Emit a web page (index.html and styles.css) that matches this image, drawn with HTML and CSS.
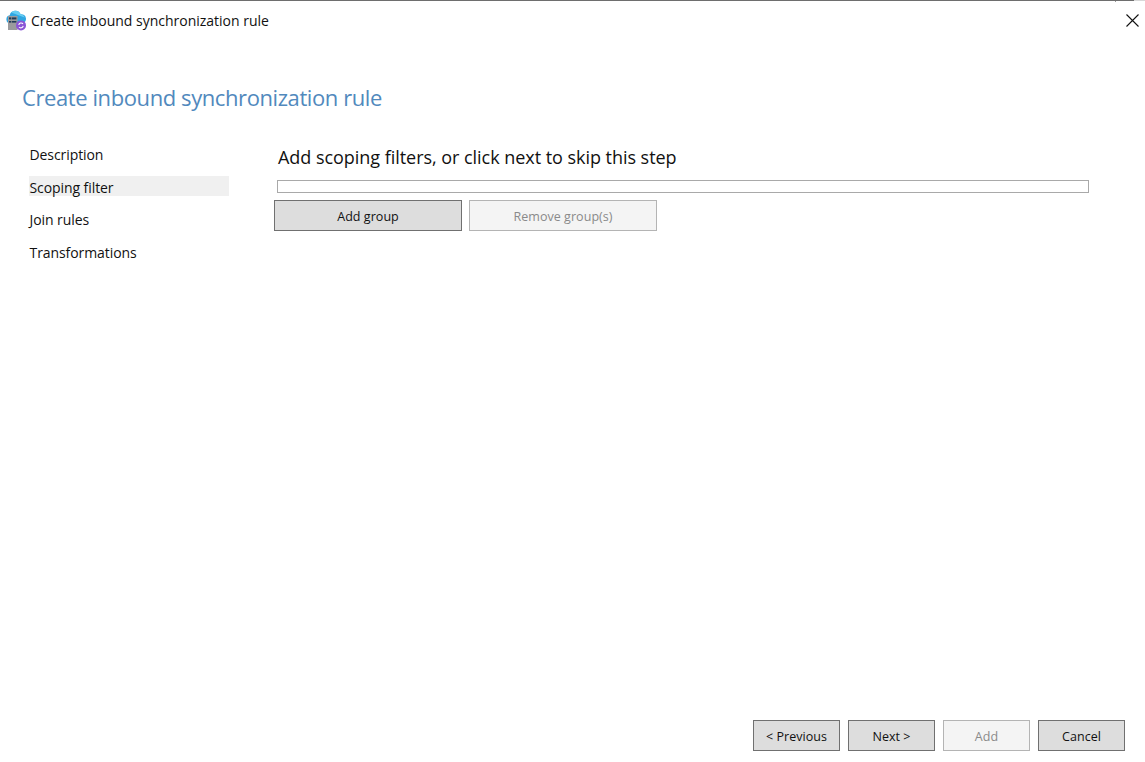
FILE: index.html
```html
<!DOCTYPE html>
<html lang="en">
<head>
<meta charset="utf-8">
<title>Create inbound synchronization rule</title>
<link rel="stylesheet" href="styles.css">
</head>
<body>
<div class="window">
  <div class="top-edge"></div>
  <header class="titlebar">
    <svg class="app-icon" width="20" height="22" viewBox="0 0 20 22">
      <path d="M4.5 14.5a4.2 4.2 0 0 1-.8-8.3A5.8 5.8 0 0 1 14.6 5.2a4.7 4.7 0 0 1 1.4 9.3z" fill="#2fa6e2"/>
      <path d="M5.2 3.6a5.6 5.6 0 0 1 9.4 1.6 4.6 4.6 0 0 1 4 3.2z" fill="#66cdf2"/>
      <rect x="2" y="7" width="9.5" height="14" fill="#9a9b9d"/>
      <rect x="3" y="8.4" width="2.2" height="2" fill="#1f3b58"/>
      <rect x="5.8" y="8.4" width="4.6" height="2" fill="#1f3b58"/>
      <rect x="3" y="12" width="2.2" height="1.6" fill="#1f3b58"/>
      <rect x="5.8" y="12" width="4.6" height="1.6" fill="#1f3b58"/>
      <circle cx="15" cy="16.4" r="5" fill="#8b55d6"/>
      <path d="M12.8 16a2.4 2.4 0 0 1 4.2-1.2M17.2 16.8a2.4 2.4 0 0 1-4.2 1.2" fill="none" stroke="#fff" stroke-width="1.1"/>
    </svg>
    <span class="window-title">Create inbound synchronization rule</span>
    <svg class="close" width="13" height="13" viewBox="0 0 13 13"><path d="M.5.5l12 12M12.5.5l-12 12" stroke="#111" stroke-width="1.1" fill="none"/></svg>
  </header>
  <h1 class="page-title">Create inbound synchronization rule</h1>
  <div class="content">
    <nav class="steps">
      <div class="step">Description</div>
      <div class="step active">Scoping filter</div>
      <div class="step">Join rules</div>
      <div class="step">Transformations</div>
    </nav>
    <main class="panel">
      <h2 class="panel-title">Add scoping filters, or click next to skip this step</h2>
      <div class="group-box"></div>
      <div class="group-actions">
        <button class="btn wide">Add group</button>
        <button class="btn wide" disabled>Remove group(s)</button>
      </div>
    </main>
  </div>
  <footer class="footer">
    <button class="btn">&lt; Previous</button>
    <button class="btn">Next &gt;</button>
    <button class="btn" disabled>Add</button>
    <button class="btn">Cancel</button>
  </footer>
</div>
</body>
</html>
```
FILE: styles.css
```css
* { box-sizing: border-box; }
html, body { margin: 0; height: 100%; background: #fff; }
body { font-family: "Open Sans", "Noto Sans", "Liberation Sans", sans-serif; color: #111; overflow: hidden; }
.window { height: 762px; display: flex; flex-direction: column; }
.top-edge { height: 1px; flex: none; position: relative; background: linear-gradient(to right, #6e6e6e 1134px, #d8d8d8 1134px); }
.top-edge::after { content: ""; position: absolute; left: 1115px; top: 1px; width: 1px; height: 1px; background: #9a9a9a; }
.titlebar { height: 39px; display: flex; align-items: center; padding: 0 6px; flex: none; }
.app-icon { flex: none; margin-top: -1px; }
.window-title { margin-left: 5px; font-size: 14px; letter-spacing: -0.01px; }
.close { margin-left: auto; }
.page-title { margin: 39px 0 0 22px; font-size: 22px; line-height: 36px; font-weight: 400; color: #5189bd; letter-spacing: -0.41px; }
.content { display: flex; flex: 1; margin-top: 28px; }
.steps { width: 200px; margin-left: 29px; flex: none; display: flex; flex-direction: column; gap: 12.5px; }
.step { height: 20px; line-height: 24px; font-size: 14px; letter-spacing: -0.08px; padding-left: 0.5px; }
.step.active { background: #f0f0f0; }
.panel { margin-left: 45px; flex: 1; padding-top: 2px; }
.panel-title { margin: 0 0 0 4px; font-size: 18px; line-height: 24px; font-weight: 400; letter-spacing: -0.04px; }
.group-box { margin: 11px 0 0 3px; width: 812px; height: 13px; border: 1px solid #a9a9a9; }
.group-actions { display: flex; gap: 7px; margin-top: 7px; }
.btn { width: 87px; height: 31px; padding: 1px 0 0; border: 1px solid #707070; background: #dddddd; color: #111; font: 12.5px "Open Sans", "Noto Sans", sans-serif; letter-spacing: 0.05px; }
.btn.wide { width: 188px; }
.btn:disabled { background: #f4f4f4; border-color: #b4b4b4; color: #8a8a8a; }
.footer { flex: none; display: flex; gap: 8px; justify-content: flex-end; padding: 0 20px 11px 0; }
```
